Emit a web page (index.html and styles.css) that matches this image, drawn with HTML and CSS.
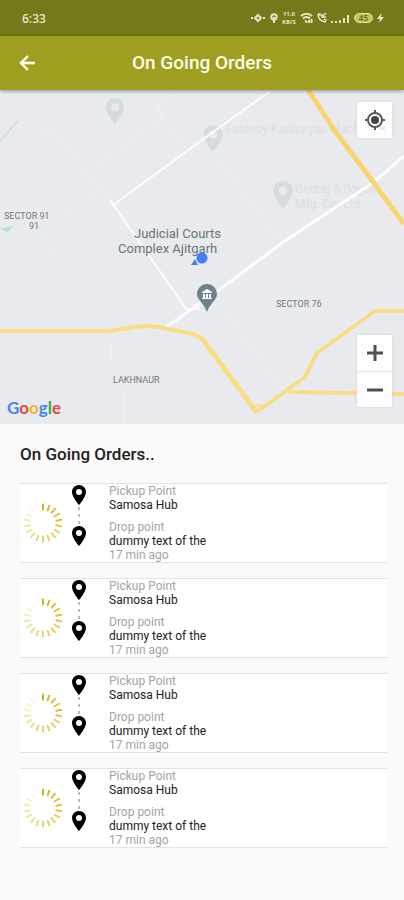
FILE: index.html
```html
<!DOCTYPE html>
<html lang="en">
<head>
<meta charset="utf-8">
<meta name="viewport" content="width=device-width, initial-scale=1">
<title>On Going Orders</title>
<link rel="stylesheet" href="styles.css">
</head>
<body>
<svg class="defs" aria-hidden="true">
  <symbol id="pin" viewBox="0 0 14 20">
    <path fill-rule="evenodd" d="M7 0C3.1 0 0 3.1 0 7c0 5 7 13 7 13s7-8 7-13c0-3.9-3.1-7-7-7zM7 4a3 3 0 1 1 0 6a3 3 0 0 1 0-6z"/>
  </symbol>
  <symbol id="route" viewBox="0 0 14 61">
    <use href="#pin" width="14" height="20"/>
    <path d="M7 22v18" stroke="#bcbcbc" stroke-width="2" stroke-dasharray="3 4"/>
    <use href="#pin" y="41" width="14" height="20"/>
  </symbol>
  <symbol id="loader" viewBox="-20 -20 40 40">
    <g stroke-width="2" stroke-linecap="round">
      <path d="M0-18.500v5" stroke="#c4b41e"/>
      <path d="M0-18.500v5" stroke="#d3bb2a" transform="rotate(20)"/>
      <path d="M0-18.500v5" stroke="#dcbc30" transform="rotate(40)"/>
      <path d="M0-18.500v5" stroke="#e6bd38" transform="rotate(60)"/>
      <path d="M0-18.500v5" stroke="#ecb83a" transform="rotate(80)"/>
      <path d="M0-18.500v5" stroke="#efc04c" transform="rotate(100)"/>
      <path d="M0-18.500v5" stroke="#ecc858" transform="rotate(120)"/>
      <path d="M0-18.500v5" stroke="#e8d065" transform="rotate(140)"/>
      <path d="M0-18.500v5" stroke="#e4d468" transform="rotate(160)"/>
      <path d="M0-18.500v5" stroke="#e2d66c" transform="rotate(180)"/>
      <path d="M0-18.500v5" stroke="#e5da78" transform="rotate(200)"/>
      <path d="M0-18.500v5" stroke="#e9df86" transform="rotate(220)"/>
      <path d="M0-18.500v5" stroke="#ede491" transform="rotate(240)"/>
      <path d="M0-18.500v5" stroke="#f0e8a2" transform="rotate(260)"/>
      <path d="M0-18.500v5" stroke="#f4edb5" transform="rotate(280)"/>
      <path d="M0-18.500v5" stroke="#f8f3cc" transform="rotate(300)"/>
      <path d="M0-18.500v5" stroke="#fbf8e2" transform="rotate(320)"/>
      <path d="M0-18.500v5" stroke="#fdfcf2" transform="rotate(340)"/>
    </g>
  </symbol>
</svg>

<div class="status">
  <span>6:33</span>
  <div class="status-icons">
    <svg width="16" height="12" viewBox="0 0 16 12" fill="none" stroke="currentColor" stroke-width="2"><path d="M1 6h2M13 6h2"/><path d="M8 3L11 6L8 9L5 6z"/></svg>
    <svg width="8" height="12" viewBox="0 0 8 12" fill="none" stroke="currentColor" stroke-width="2"><circle cx="4" cy="5" r="2.700"/><path d="M4 5v6"/></svg>
    <span class="speed"><span>11.0</span><span>KB/S</span></span>
    <svg width="13" height="12" viewBox="0 0 13 12" fill="none" stroke="currentColor" stroke-width="2"><path d="M1 4c3-3 8-3 11 0M3 6.500c2-2 5-2 7 0M5 8.500l2 2"/><path d="M9 8v3M11.500 7v4"/></svg>
    <svg width="10" height="12" viewBox="0 0 10 12" fill="none" stroke="currentColor" stroke-width="1.500"><path d="M1 2c0 4 3 7 7 8l1-2l-2-1M1 2h2v2M5 2v3h4M6 4l3-3"/></svg>
    <svg width="19" height="12" viewBox="0 0 19 12" fill="currentColor"><path d="M0 9h2v2H0zM4 9h2v2H4zM8 8h2v3H8zM12 6h2v5h-2zM16 3h2v8h-2z"/></svg>
    <span class="battery">45</span>
    <svg width="7" height="12" viewBox="0 0 7 12" fill="currentColor"><path d="M4.500 1L0 7h3l-1 4l5-6H4z"/></svg>
  </div>
</div>

<header class="appbar">
  <button class="back" type="button" aria-label="Back">
    <svg width="24" height="24" viewBox="0 0 24 24" fill="currentColor" stroke="currentColor"><path d="M20 11H7.830l5.590-5.590L12 4l-8 8l8 8l1.410-1.410L7.830 13H20z"/></svg>
  </button>
  <h1>On Going Orders</h1>
</header>

<main>
  <section class="map" aria-label="Map">
    <svg class="map-canvas" viewBox="0 0 404 334" preserveAspectRatio="xMidYMid slice">
      <g fill="none" stroke="#f1f2f5" stroke-width="1">
        <path d="M38 38l17 8l18 18l12 20l78-57l24 33M163 27l-6-12l14-11M85 84l25 26M98 102l-33 22M212 60l70 93M222 219l60 80M40 142l14 22M111 252v18M124 334v-30l20-22"/>
      </g>
      <path d="M0 51L18 31" stroke="#bccbf3" stroke-width="1"/>
      <path d="M0 139l13-3l-5 6z" fill="#b4e4cb"/>
      <g fill="#d5dcdf">
        <use href="#pin" x="105" y="8" width="20" height="26"/>
        <use href="#pin" x="203" y="35" width="20" height="27"/>
        <use href="#pin" x="273" y="91" width="20" height="28"/>
      </g>
      <g class="place faint">
        <text x="226" y="43">Fateney Kacharyac Machi</text>
        <text x="295" y="103">Godrej &amp; Boyce</text>
        <text x="295" y="118">Mfg. Co. Ltd</text>
      </g>
      <g fill="none" stroke="#fcfcfd" stroke-linejoin="round">
        <path d="M269 2L202 50L112 116M110 110L187 220L200 218" stroke-width="2"/>
        <path d="M404 66L374 92L282 153L219 200L165 238" stroke-width="3"/>
      </g>
      <g fill="none" stroke="#f9dc86" stroke-linejoin="round">
        <path d="M0 241H106C125 240 132 236 147 236C165 237 176 241 193 244Q200 246 203 251" stroke-width="4"/>
        <path d="M258 321L305 287L317 263L375 221H404M289 302L404 304" stroke-width="4"/>
        <path d="M201 247L257 323" stroke-width="5"/>
        <path d="M250 317l8-2l8 1" stroke-width="2"/>
        <path d="M308 0L335 41L374 93L404 134" stroke="#f9d570" stroke-width="5"/>
      </g>
      <g class="place">
        <text x="134" y="148">Judicial Courts</text>
        <text x="118" y="163">Complex Ajitgarh</text>
      </g>
      <g class="area">
        <text x="4" y="129">SECTOR 91</text>
        <text x="29" y="139">91</text>
        <text x="276" y="217">SECTOR 76</text>
        <text x="113" y="293">LAKHNAUR</text>
      </g>
      <circle cx="202" cy="168" r="5.500" fill="#4581ee"/>
      <path d="M191 175l4-6l3 6z" fill="#4581ee"/>
      <path d="M207 194c-5.500 0-10 4.500-10 10c0 6 7 9 10 18c3-9 10-12 10-18c0-5.500-4.500-10-10-10z" fill="#6c838c"/>
      <path d="M202 202l5-3l5 3v1h-10zM203 204h2v4h-2zM206 204h2v4h-2zM209 204h2v4h-2zM202 208h10v1h-10z" fill="#fff"/>
    </svg>
    <button class="map-btn locate" type="button" aria-label="My location">
      <svg width="20" height="20" viewBox="0 0 20 20" fill="none" stroke="#5a5a5a" stroke-width="2"><circle cx="18" cy="19" r="3" fill="#e3ebfb" stroke="none"/><circle cx="10" cy="10" r="7"/><path d="M10 0v3M10 17v3M0 10h3M17 10h3"/><circle cx="10" cy="10" r="4" fill="#444" stroke="none"/></svg>
    </button>
    <div class="zoom">
      <button class="map-btn" type="button" aria-label="Zoom in">
        <svg width="18" height="18" viewBox="0 0 18 18" stroke="#505050" stroke-width="3"><path d="M1 9h16M9 1v16"/></svg>
      </button>
      <button class="map-btn" type="button" aria-label="Zoom out">
        <svg width="18" height="18" viewBox="0 0 18 18" stroke="#505050" stroke-width="3"><path d="M1 9h16"/></svg>
      </button>
    </div>
    <div class="google"><span class="b">G</span><span class="r">o</span><span class="y">o</span><span class="b">g</span><span class="g">l</span><span class="r">e</span></div>
  </section>

  <section class="orders">
    <h2>On Going Orders..</h2>
    <ul>
      <li class="card">
        <svg class="loader"><use href="#loader"/></svg>
        <svg class="route"><use href="#route"/></svg>
        <div class="details">
          <p><span>Pickup Point</span><strong>Samosa Hub</strong></p>
          <p><span>Drop point</span><strong>dummy text of the</strong><time>17 min ago</time></p>
        </div>
      </li>
      <li class="card">
        <svg class="loader"><use href="#loader"/></svg>
        <svg class="route"><use href="#route"/></svg>
        <div class="details">
          <p><span>Pickup Point</span><strong>Samosa Hub</strong></p>
          <p><span>Drop point</span><strong>dummy text of the</strong><time>17 min ago</time></p>
        </div>
      </li>
      <li class="card">
        <svg class="loader"><use href="#loader"/></svg>
        <svg class="route"><use href="#route"/></svg>
        <div class="details">
          <p><span>Pickup Point</span><strong>Samosa Hub</strong></p>
          <p><span>Drop point</span><strong>dummy text of the</strong><time>17 min ago</time></p>
        </div>
      </li>
      <li class="card">
        <svg class="loader"><use href="#loader"/></svg>
        <svg class="route"><use href="#route"/></svg>
        <div class="details">
          <p><span>Pickup Point</span><strong>Samosa Hub</strong></p>
          <p><span>Drop point</span><strong>dummy text of the</strong><time>17 min ago</time></p>
        </div>
      </li>
    </ul>
  </section>
</main>
</body>
</html>
```
FILE: styles.css
```css
* { box-sizing: border-box; }

body {
  margin: 0;
  min-height: 100vh;
  background: #fafafa;
  color: #222;
  font-family: Roboto, "Liberation Sans", sans-serif;
}

h1, h2, p, ul { margin: 0; padding: 0; }

button {
  padding: 0;
  border: 0;
  background: none;
  color: inherit;
  font: inherit;
}

svg { display: block; }

.defs {
  position: absolute;
  width: 0;
  height: 0;
}

.status {
  display: flex;
  align-items: center;
  justify-content: space-between;
  height: 36px;
  padding: 0 20px 0 22px;
  background: #74791a;
  color: #e6e6c4;
  font: 600 12px "Open Sans", sans-serif;
}

.status-icons {
  display: flex;
  align-items: center;
  gap: 4px;
}

.speed {
  display: flex;
  flex-direction: column;
  align-items: center;
  font-size: 6px;
  line-height: 8px;
  font-weight: 700;
}

.battery {
  padding: 0 4px;
  border: 1px solid #e0e09a;
  border-radius: 5px;
  background: #c3c562;
  color: #5f6416;
  font-size: 8px;
  line-height: 8px;
}

.appbar {
  position: relative;
  z-index: 1;
  display: grid;
  grid-template-columns: 24px 1fr 24px;
  align-items: center;
  height: 54px;
  padding: 0 16px;
  background: #9e9e20;
  color: #fdfdea;
  box-shadow: 0 1px 4px rgba(0, 0, 0, 0.4);
}

.back svg {
  width: 22px;
  height: 22px;
}

.appbar h1 {
  font-size: 19px;
  line-height: 24px;
  font-weight: 500;
  text-align: center;
}

.map {
  position: relative;
  background: #e9eaee;
}

.map-canvas {
  width: 100%;
  aspect-ratio: 404 / 334;
}

.place {
  fill: #64767e;
  font-size: 13px;
}

.faint {
  fill: #d9dfe3;
  font-size: 12px;
}

.area {
  fill: #74777b;
  font-size: 9px;
}

.map-btn {
  display: grid;
  place-items: center;
  width: 35px;
  height: 36px;
  background: #fdfdfd;
}

.locate {
  position: absolute;
  top: 12px;
  right: 12px;
  box-shadow: 0 0 3px rgba(0, 0, 0, 0.1);
}

.zoom {
  position: absolute;
  right: 12px;
  bottom: 17px;
  box-shadow: 0 0 3px rgba(0, 0, 0, 0.1);
}

.zoom .map-btn + .map-btn { border-top: 1px solid #e4e4e4; }

.google {
  position: absolute;
  left: 7px;
  bottom: 6px;
  font: 700 17px/20px Lato, sans-serif;
}

.b { color: #4285f4; }
.r { color: #e04a40; }
.y { color: #f4b921; }
.g { color: #34a853; }

.orders { padding: 18px 17px 24px 20px; }

.orders h2 {
  font-size: 17px;
  line-height: 24px;
  font-weight: 500;
}

.orders ul {
  display: grid;
  gap: 15px;
  margin-top: 17px;
  list-style: none;
}

.card {
  display: flex;
  border-top: 1px solid #e2e2e2;
  border-bottom: 1px solid #e2e2e2;
  background: #fff;
}

.loader {
  align-self: center;
  width: 40px;
  height: 40px;
  margin-left: 3px;
}

.route {
  width: 14px;
  height: 61px;
  margin: 1px 23px 0 9px;
}

.details {
  display: grid;
  gap: 8px;
  font-size: 12px;
  line-height: 14px;
}

.details span,
.details strong,
.details time { display: block; }

.details span,
.details time { color: #a4a4a4; }

.details strong { font-weight: 400; }
```
